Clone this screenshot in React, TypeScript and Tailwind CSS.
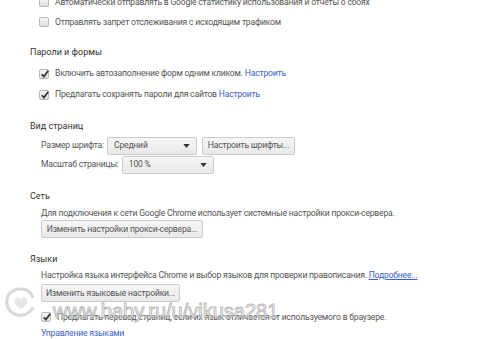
import React from 'react';

const font = { fontFamily: 'Roboto, "Noto Sans", sans-serif' };

const Check = ({ checked }: { checked?: boolean }) => (
    <span className="relative inline-flex w-[10px] h-[10px] shrink-0 border border-[#b8b8b8] rounded-[2px] bg-gradient-to-b from-[#f6f6f6] to-[#e0e0e0]">
        {checked && (
            <svg viewBox="0 0 10 10" className="absolute left-[0px] top-[-1px] w-[10px] h-[10px]">
                <path d="M1.8 5.2 L3.9 7.6 L8.2 1.8" fill="none" stroke="#333" strokeWidth="1.7" />
            </svg>
        )}
    </span>
);

const Btn = ({ children, width }: { children: React.ReactNode; width: string }) => (
    <button className={`${width} h-[18px] shrink-0 whitespace-nowrap text-[8.6px] tracking-[-0.2px] leading-none text-[#555] border border-[#cbcbcb] rounded-[2px] bg-gradient-to-b from-[#f7f7f7] to-[#e8e8e8]`}>
        {children}
    </button>
);

const Select = ({ value, width }: { value: string; width: string }) => (
    <div className={`${width} h-[18px] shrink-0 flex items-center justify-between pl-[6px] pr-[6px] text-[#555] border border-[#cbcbcb] rounded-[2px] bg-gradient-to-b from-[#f7f7f7] to-[#e8e8e8]`}>
        <span>{value}</span>
        <svg viewBox="0 0 8 5" className="w-[7px] h-[4px]">
            <path d="M0 0 L8 0 L4 5 Z" fill="#333" />
        </svg>
    </div>
);

const Link = ({ children, underline }: { children: React.ReactNode; underline?: boolean }) => (
    <span className={`text-[#3a63c8] ${underline ? 'underline' : ''}`}>{children}</span>
);

const Row = ({ children, h, mt }: { children: React.ReactNode; h: string; mt?: string }) => (
    <div className={`flex items-center whitespace-nowrap ${h} ${mt ?? ''}`}>{children}</div>
);

const Heading = ({ children, h, mt }: { children: React.ReactNode; h: string; mt: string }) => (
    <Row h={h} mt={mt}>
        <span className="pl-[30px] text-[9px] tracking-[0px] text-[#333]">{children}</span>
    </Row>
);

export default function App() {
    return (
        <div
            className="relative w-[480px] h-[339px] overflow-hidden bg-white text-[8.6px] tracking-[-0.2px] text-[#555] leading-none"
            style={font}
        >
            <div className="flex flex-col mt-[-8px]">
                {/* Privacy rows (cut off) */}
                <div className="flex flex-col pl-[39px]">
                    <Row h="h-[20px]">
                        <Check />
                        <span className="ml-[6px]">Автоматически отправлять в Google статистику использования и отчеты о сбоях</span>
                    </Row>
                    <Row h="h-[20px]">
                        <Check />
                        <span className="ml-[6px]">Отправлять запрет отслеживания с исходящим трафиком</span>
                    </Row>
                </div>

                {/* Passwords */}
                <Heading h="h-[20px]" mt="mt-[10px]">Пароли и формы</Heading>
                <div className="flex flex-col pl-[39px] mt-[1px]">
                    <Row h="h-[21px]">
                        <Check checked />
                        <span className="ml-[6px]">
                            Включить автозаполнение форм одним кликом. <Link>Настроить</Link>
                        </span>
                    </Row>
                    <Row h="h-[21px]">
                        <Check checked />
                        <span className="ml-[6px]">
                            Предлагать сохранять пароли для сайтов <Link>Настроить</Link>
                        </span>
                    </Row>
                </div>

                {/* Web content */}
                <Heading h="h-[20px]" mt="mt-[11px]">Вид страниц</Heading>
                <div className="flex flex-col pl-[41px]">
                    <Row h="h-[19px]">
                        <span className="w-[66px] shrink-0">Размер шрифта:</span>
                        <Select value="Средний" width="w-[90px]" />
                        <span className="ml-[5px] flex">
                            <Btn width="w-[93px]">Настроить шрифты...</Btn>
                        </span>
                    </Row>
                    <Row h="h-[19px]">
                        <span className="shrink-0 mr-[3px]">Масштаб страницы:</span>
                        <Select value="100 %" width="w-[92px]" />
                    </Row>
                </div>

                {/* Network */}
                <Heading h="h-[20px]" mt="mt-[12px]">Сеть</Heading>
                <Row h="h-[14px]">
                    <span className="pl-[41px]">
                        Для подключения к сети Google Chrome использует системные настройки прокси-сервера.
                    </span>
                </Row>
                <div className="flex pl-[41px]">
                    <Btn width="w-[162px]">Изменить настройки прокси-сервера...</Btn>
                </div>

                {/* Languages */}
                <Heading h="h-[18px]" mt="mt-[12px]">Языки</Heading>
                <Row h="h-[14px]">
                    <span className="pl-[41px]">
                        Настройка языка интерфейса Chrome и выбор языков для проверки правописания.{' '}
                        <Link underline>Подробнее...</Link>
                    </span>
                </Row>
                <div className="flex pl-[41px] mt-[2px]">
                    <Btn width="w-[139px]">Изменить языковые настройки...</Btn>
                </div>
                <Row h="h-[18px]" mt="mt-[6px]">
                    <span className="pl-[41px] flex items-center">
                        <Check checked />
                        <span className="ml-[6px]">
                            Предлагать перевод страниц, если их язык отличается от используемого в браузере.
                        </span>
                    </span>
                </Row>
                <Row h="h-[14px]">
                    <span className="pl-[41px]">
                        <Link>Управление языками</Link>
                    </span>
                </Row>
            </div>

            {/* Watermark */}
            <div className="absolute left-[2px] top-[283px] flex items-center pointer-events-none">
                <svg viewBox="0 0 40 40" className="w-[36px] h-[36px]">
                    <path
                        d="M34 14 C30 5 18 3 10 9 C3 15 4 28 13 33 C20 37 30 34 34 27"
                        fill="none"
                        stroke="#d9d9d9"
                        strokeWidth="3.5"
                        strokeLinecap="round"
                    />
                    <path
                        d="M14 19 C14 14 20 13 21 18 C22 13 28 14 28 19 C28 24 21 28 21 28 C21 28 14 24 14 19 Z"
                        fill="#e6e6e6"
                    />
                </svg>
                <span
                    className="ml-[15px] mt-[18px] text-[20px] tracking-[0px] text-[rgba(255,255,255,0.55)]"
                    style={{ fontFamily: '"Liberation Sans", sans-serif', WebkitTextStroke: '1px rgba(170,170,170,0.8)' }}
                >
                    www.baby.ru/u/vikusa281
                </span>
            </div>
        </div>
    );
}
